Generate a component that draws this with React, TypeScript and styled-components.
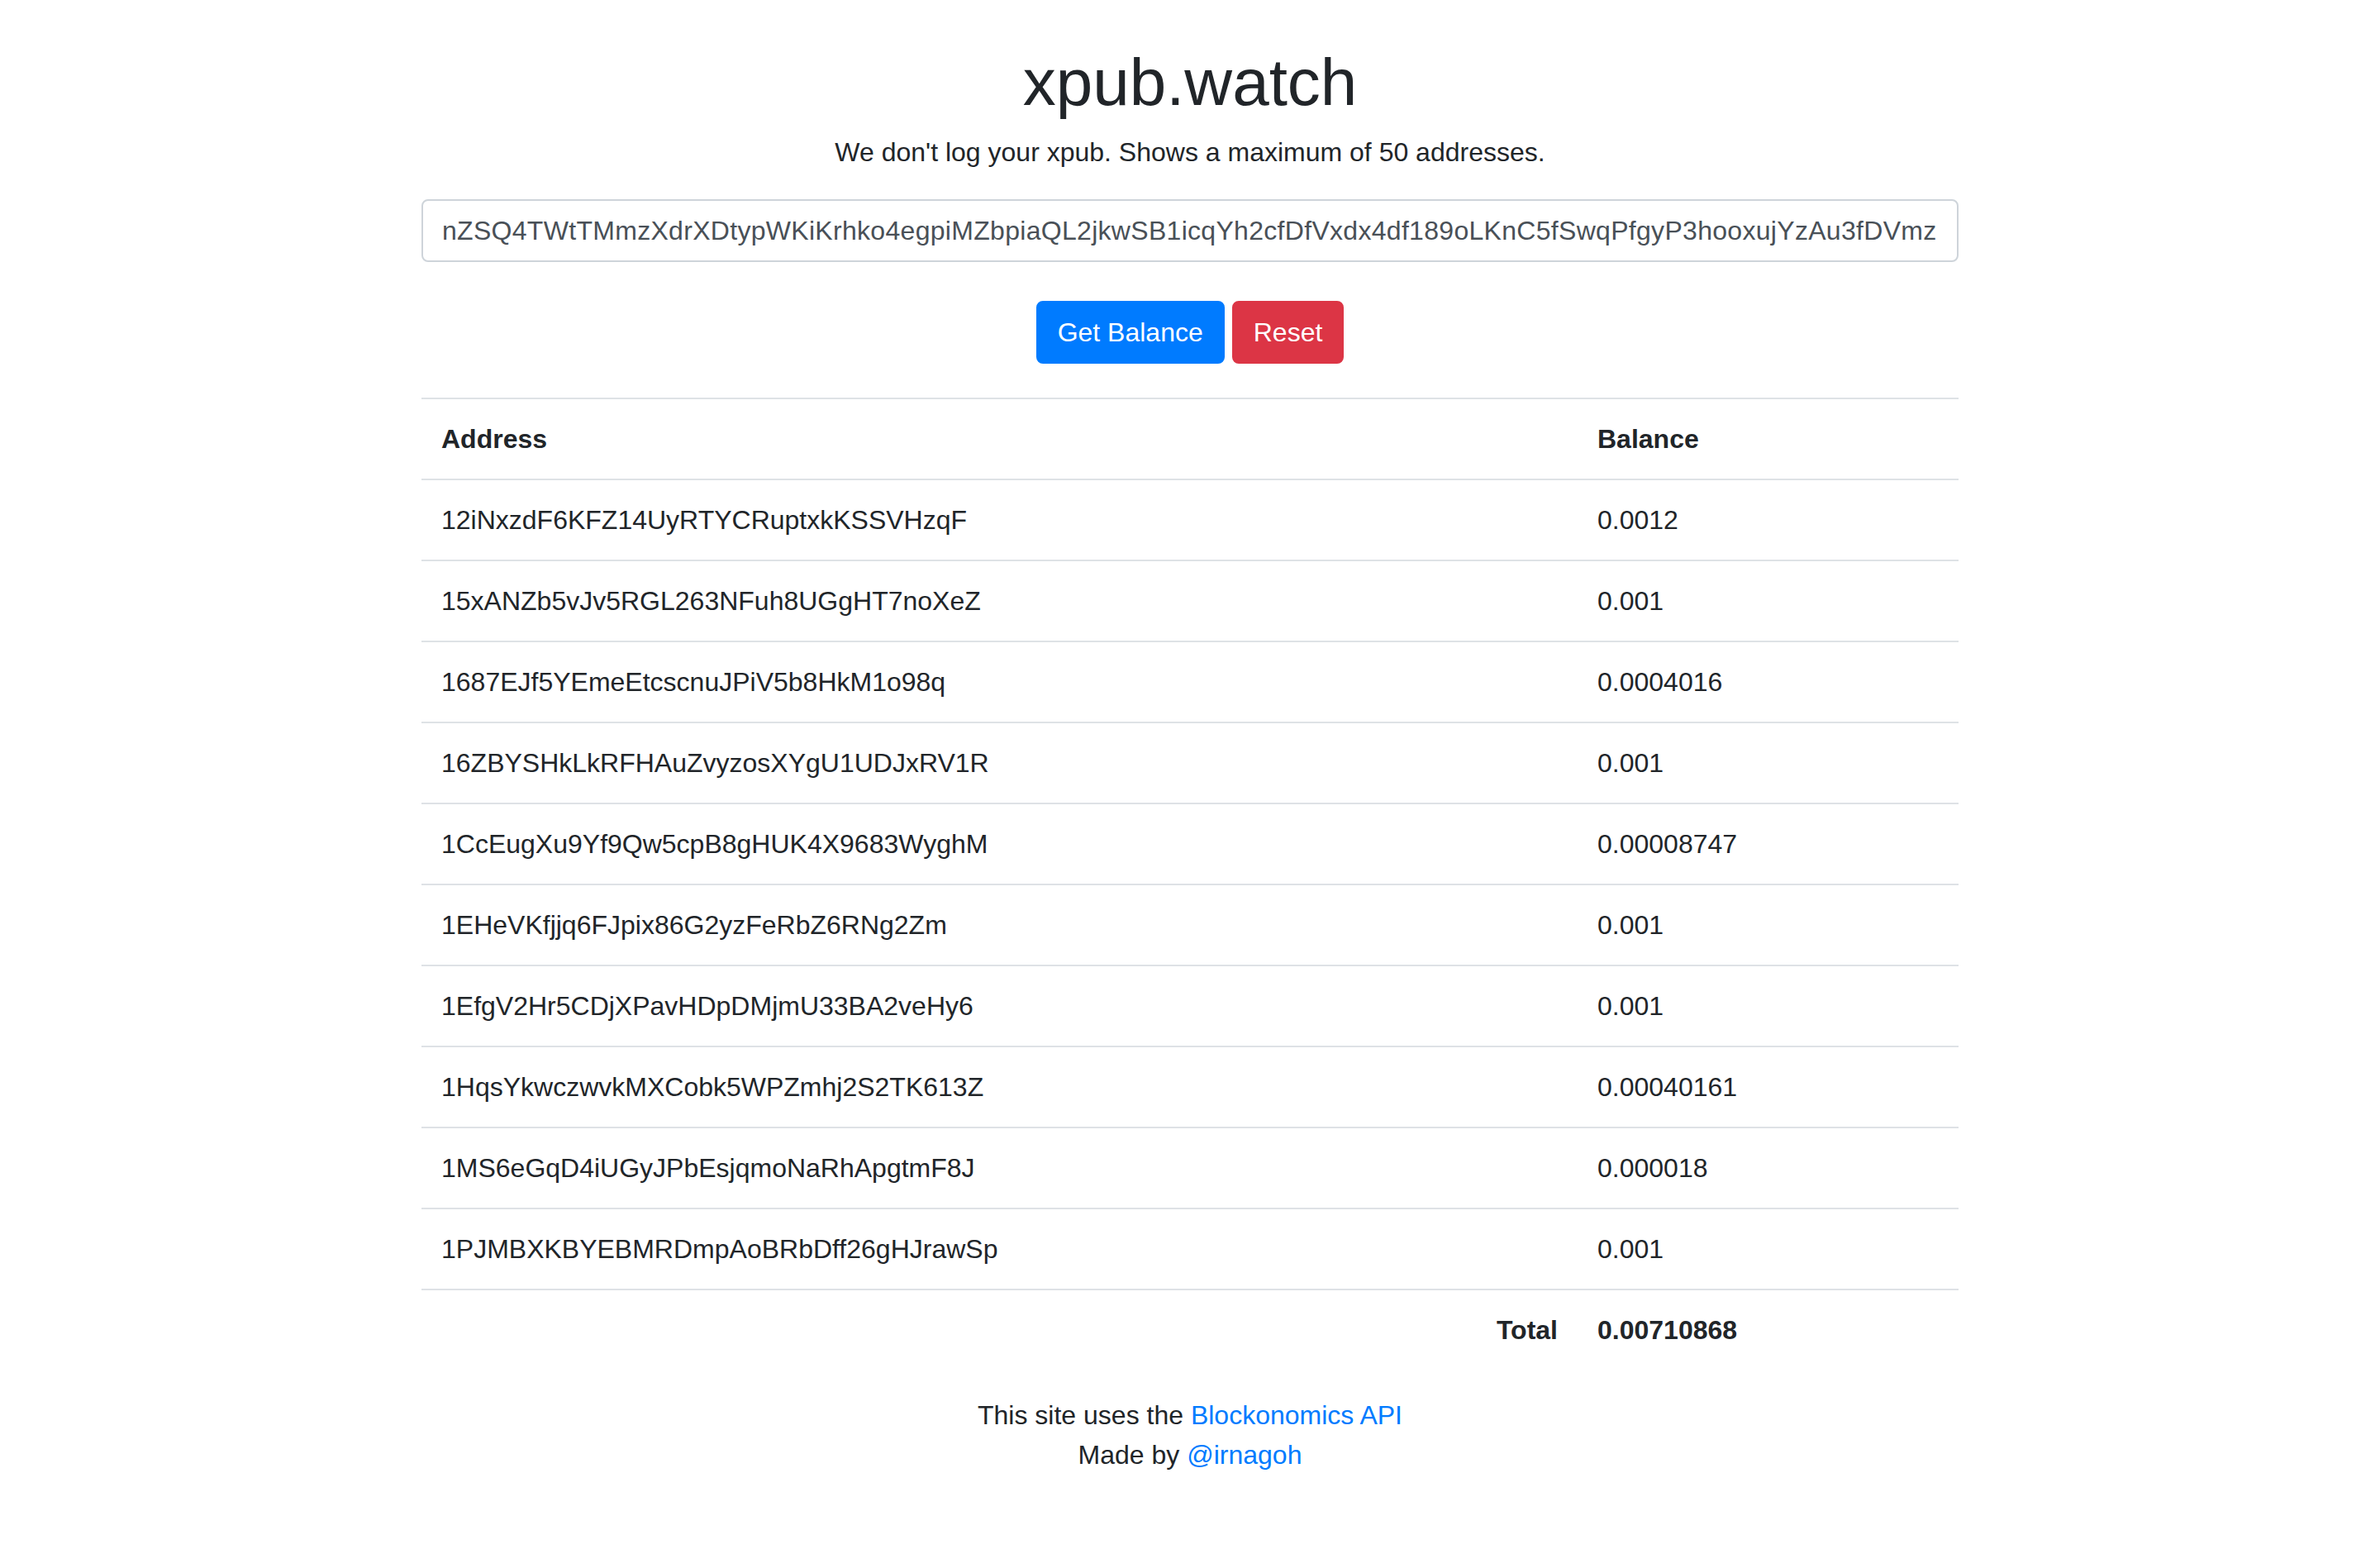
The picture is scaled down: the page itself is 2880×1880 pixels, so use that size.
import React, { useEffect, useRef } from "react";
import styled, { createGlobalStyle, css } from "styled-components";

const GlobalStyle = createGlobalStyle`
  * { box-sizing: border-box; }
  html, body { margin: 0; padding: 0; background: #ffffff; }
  body {
    font-family: "Liberation Sans", Arial, Helvetica, sans-serif;
    font-size: 32px;
    line-height: 1.5;
    color: #212529;
  }
`;

const Page = styled.main`
  min-height: 1880px;
  padding-top: 52px;
`;

const Container = styled.div`
  width: 100%;
  max-width: 1920px;
  margin: 0 auto;
  padding: 0 30px;
  display: flex;
  flex-direction: column;
  align-items: stretch;
`;

const Title = styled.h1`
  margin: 0 0 12px;
  font-size: 80px;
  font-weight: 500;
  line-height: 1.2;
  text-align: center;
  color: #212529;
`;

const Lead = styled.p`
  margin: 0 0 33px;
  font-size: 32px;
  line-height: 48px;
  text-align: center;
`;

const XpubInput = styled.input`
  display: block;
  width: 100%;
  height: 76px;
  padding: 12px 24px;
  font-family: inherit;
  font-size: 32px;
  line-height: 48px;
  letter-spacing: 0.3px;
  color: #495057;
  background: #ffffff;
  border: 2px solid #ced4da;
  border-radius: 8px;
  outline: none;
`;

const ButtonRow = styled.div`
  display: flex;
  justify-content: center;
  gap: 9px;
  margin: 47px 0 41px;
`;

const Button = styled.button<{ $variant: "primary" | "danger" }>`
  height: 76px;
  padding: 12px 24px;
  font-family: inherit;
  font-size: 32px;
  line-height: 48px;
  font-weight: 400;
  color: #ffffff;
  border-radius: 8px;
  cursor: pointer;
  ${({ $variant }) =>
    $variant === "primary"
      ? css`
          background: #007bff;
          border: 2px solid #007bff;
        `
      : css`
          background: #dc3545;
          border: 2px solid #dc3545;
        `}
`;

const Table = styled.table`
  width: 100%;
  border-collapse: collapse;
  table-layout: fixed;
  margin-bottom: 31px;
`;

const HeadCell = styled.th`
  padding: 24px;
  line-height: 48px;
  text-align: left;
  font-weight: 700;
  vertical-align: top;
  border-top: 2px solid #dee2e6;
`;

const Cell = styled.td<{ $bold?: boolean; $right?: boolean }>`
  padding: 24px;
  line-height: 48px;
  vertical-align: top;
  border-top: 2px solid #dee2e6;
  text-align: ${({ $right }) => ($right ? "right" : "left")};
  font-weight: ${({ $bold }) => ($bold ? 700 : 400)};
`;

const Footer = styled.footer`
  display: flex;
  flex-direction: column;
  align-items: center;
  text-align: center;
`;

const FooterLine = styled.div`
  line-height: 48px;
  font-size: 32px;
`;

const Link = styled.a`
  color: #007bff;
  text-decoration: none;
`;

const rows: [string, string][] = [
  ["12iNxzdF6KFZ14UyRTYCRuptxkKSSVHzqF", "0.0012"],
  ["15xANZb5vJv5RGL263NFuh8UGgHT7noXeZ", "0.001"],
  ["1687EJf5YEmeEtcscnuJPiV5b8HkM1o98q", "0.0004016"],
  ["16ZBYSHkLkRFHAuZvyzosXYgU1UDJxRV1R", "0.001"],
  ["1CcEugXu9Yf9Qw5cpB8gHUK4X9683WyghM", "0.00008747"],
  ["1EHeVKfjjq6FJpix86G2yzFeRbZ6RNg2Zm", "0.001"],
  ["1EfgV2Hr5CDjXPavHDpDMjmU33BA2veHy6", "0.001"],
  ["1HqsYkwczwvkMXCobk5WPZmhj2S2TK613Z", "0.00040161"],
  ["1MS6eGqD4iUGyJPbEsjqmoNaRhApgtmF8J", "0.000018"],
  ["1PJMBXKBYEBMRDmpAoBRbDff26gHJrawSp", "0.001"],
];

const XPUB =
  "nZSQ4TWtTMmzXdrXDtypWKiKrhko4egpiMZbpiaQL2jkwSB1icqYh2cfDfVxdx4df189oLKnC5fSwqPfgyP3hooxujYzAu3fDVmz";

export default function App() {
  const inputRef = useRef<HTMLInputElement>(null);
  useEffect(() => {
    const el = inputRef.current;
    if (el) el.scrollLeft = el.scrollWidth;
  }, []);

  return (
    <>
      <GlobalStyle />
      <Page>
        <Container>
          <Title>xpub.watch</Title>
          <Lead>We don't log your xpub. Shows a maximum of 50 addresses.</Lead>
          <XpubInput ref={inputRef} type="text" readOnly value={XPUB} />
          <ButtonRow>
            <Button $variant="primary">Get Balance</Button>
            <Button $variant="danger">Reset</Button>
          </ButtonRow>
          <Table>
            <colgroup>
              <col style={{ width: "1399px" }} />
              <col />
            </colgroup>
            <thead>
              <tr>
                <HeadCell>Address</HeadCell>
                <HeadCell>Balance</HeadCell>
              </tr>
            </thead>
            <tbody>
              {rows.map(([addr, bal]) => (
                <tr key={addr}>
                  <Cell>{addr}</Cell>
                  <Cell>{bal}</Cell>
                </tr>
              ))}
              <tr>
                <Cell $bold $right>
                  Total
                </Cell>
                <Cell $bold>0.00710868</Cell>
              </tr>
            </tbody>
          </Table>
          <Footer>
            <FooterLine>
              This site uses the <Link href="#">Blockonomics API</Link>
            </FooterLine>
            <FooterLine>
              Made by <Link href="#">@irnagoh</Link>
            </FooterLine>
          </Footer>
        </Container>
      </Page>
    </>
  );
}
